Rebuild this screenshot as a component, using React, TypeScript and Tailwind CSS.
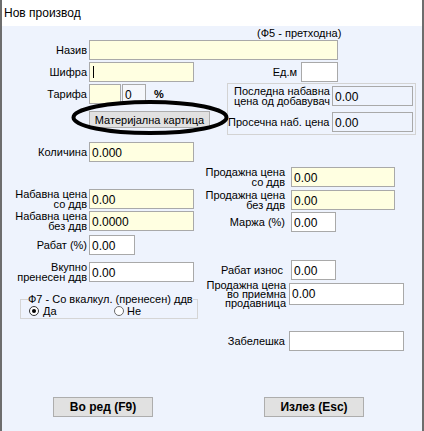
import React from "react";

const FONT = "font-['Liberation_Sans',Arial,sans-serif]";

function Box({
  className = "",
  value = "",
  bg = "bg-white",
  children,
}: {
  className?: string;
  value?: string;
  bg?: string;
  children?: React.ReactNode;
}) {
  return (
    <div
      className={`box-border shrink-0 border border-[#a9a9a9] px-[2px] pt-[3px] text-[12px] leading-[14px] text-black ${bg} ${className}`}
    >
      {children ?? value}
    </div>
  );
}

function Radio({ checked }: { checked?: boolean }) {
  return (
    <div
      className={`box-border flex h-[10px] w-[10px] shrink-0 items-center justify-center rounded-full border bg-white ${
        checked ? "border-[#333333]" : "border-[#6b6b6b]"
      }`}
    >
      {checked && <div className="h-[4px] w-[4px] rounded-full bg-black" />}
    </div>
  );
}

export default function App() {
  return (
    <div
      className={`relative box-border flex h-[431px] w-[424px] flex-col overflow-hidden border-l-2 border-r-2 border-[#6d6d6d] bg-[#eef3fd] text-black ${FONT}`}
    >
      {/* title bar */}
      <div className="flex h-[26px] shrink-0 items-center bg-white pl-[2px] text-[12px]">
        Нов производ
      </div>

      {/* F5 hint */}
      <div className="h-[14px] pl-[255px] text-[11px] leading-[14px]">(Ф5 - претходна)</div>

      {/* Назив */}
      <div className="flex h-[20px] items-center">
        <div className="w-[85px] text-right text-[11px] leading-[14px]">Назив</div>
        <Box className="ml-[2px] h-[20px] w-[249px]" bg="bg-[#ffffe1]" />
      </div>

      {/* Шифра + Ед.м */}
      <div className="mt-[2px] flex h-[20px] items-center">
        <div className="w-[85px] text-right text-[11px] leading-[14px]">Шифра</div>
        <Box className="ml-[2px] h-[20px] w-[105px]" bg="bg-[#ffffe1]">
          <div className="ml-[1px] h-[12px] w-[1px] bg-black" />
        </Box>
        <div className="w-[103px] text-right text-[11px] leading-[14px]">Ед.м</div>
        <Box className="ml-[4px] h-[20px] w-[37px]" />
      </div>

      {/* Тарифа + button + panel */}
      <div className="mt-[1px] flex items-start">
        <div className="flex w-[225px] flex-col">
          <div className="mt-[1px] flex h-[20px] items-center">
            <div className="w-[85px] text-right text-[11px] leading-[14px]">Тарифа</div>
            <Box className="ml-[2px] h-[20px] w-[32px]" bg="bg-[#ffffe1]" />
            <Box className="ml-[1px] h-[20px] w-[24px]" bg="bg-[#f5f7fb]" value="0" />
            <div className="ml-[8px] text-[11px] font-bold leading-[14px]">%</div>
          </div>
          <div className="ml-[87px] mt-[7px] box-border flex h-[17px] w-[121px] items-center justify-center border border-[#adadad] bg-[#e1e1e1] text-[11px] leading-[14px]">
            Материјална картица
          </div>
        </div>
        <div className="box-border flex h-[52px] w-[189px] flex-col border border-[#d3d3d3]">
          <div className="mt-[2px] flex">
            <div className="flex w-[101px] flex-col justify-center whitespace-nowrap pl-[6px] text-[11px] leading-[10px]">
              <span>Последна набавна</span>
              <span>цена од добавувач</span>
            </div>
            <Box className="ml-[3px] h-[20px] w-[81px]" bg="bg-transparent" value="0.00" />
          </div>
          <div className="mt-[6px] flex items-center">
            <div className="w-[101px] whitespace-nowrap text-right text-[11px] leading-[14px]">
              Просечна наб. цена
            </div>
            <Box className="ml-[3px] h-[20px] w-[81px]" bg="bg-transparent" value="0.00" />
          </div>
        </div>
      </div>

      {/* lower two columns */}
      <div className="flex items-start">
        {/* left */}
        <div className="flex w-[198px] shrink-0 flex-col">
          <div className="mt-[7px] flex h-[20px] items-center">
            <div className="w-[85px] text-right text-[11px] leading-[14px]">Количина</div>
            <Box className="ml-[2px] h-[20px] w-[105px]" bg="bg-[#ffffe1]" value="0.000" />
          </div>
          <div className="mt-[27px] flex h-[20px] items-center">
            <div className="flex w-[85px] flex-col text-right text-[11px] leading-[10px]">
              <span>Набавна цена</span>
              <span>со ддв</span>
            </div>
            <Box className="ml-[2px] h-[20px] w-[105px]" bg="bg-[#ffffe1]" value="0.00" />
          </div>
          <div className="mt-[2px] flex h-[20px] items-center">
            <div className="flex w-[85px] flex-col text-right text-[11px] leading-[10px]">
              <span>Набавна цена</span>
              <span>без ддв</span>
            </div>
            <Box className="ml-[2px] h-[20px] w-[105px]" bg="bg-[#ffffe1]" value="0.0000" />
          </div>
          <div className="mt-[4px] flex h-[20px] items-center">
            <div className="w-[85px] text-right text-[11px] leading-[14px]">Рабат (%)</div>
            <Box className="ml-[2px] h-[20px] w-[46px]" value="0.00" />
          </div>
          <div className="mt-[7px] flex h-[20px] items-center">
            <div className="flex w-[85px] flex-col text-right text-[11px] leading-[10px]">
              <span>Вкупно</span>
              <span>пренесен ддв</span>
            </div>
            <Box className="ml-[2px] h-[20px] w-[105px]" value="0.00" />
          </div>
          <fieldset className="ml-[18px] mt-[10px] box-border w-[178px] border border-[#d5d5d5] pb-[2px]">
            <legend className="ml-[7px] whitespace-nowrap px-0 text-[11px] leading-[14px]">
              Ф7 - Со вкалкул. (пренесен) ддв
            </legend>
            <div className="flex h-[10px] items-center text-[11px] leading-[10px]">
              <div className="ml-[8px] flex w-[85px] items-center">
                <Radio checked />
                <span className="ml-[4px]">Да</span>
              </div>
              <div className="flex items-center">
                <Radio />
                <span className="ml-[3px]">Не</span>
              </div>
            </div>
          </fieldset>
        </div>

        {/* right */}
        <div className="flex flex-col">
          <div className="mt-[32px] flex h-[20px] items-center">
            <div className="flex w-[85px] flex-col text-right text-[11px] leading-[10px]">
              <span>Продажна цена</span>
              <span>со ддв</span>
            </div>
            <Box className="ml-[6px] h-[20px] w-[104px]" bg="bg-[#ffffe1]" value="0.00" />
          </div>
          <div className="mt-[3px] flex h-[20px] items-center">
            <div className="flex w-[85px] flex-col text-right text-[11px] leading-[10px]">
              <span>Продажна цена</span>
              <span>без ддв</span>
            </div>
            <Box className="ml-[6px] h-[20px] w-[104px]" bg="bg-[#ffffe1]" value="0.00" />
          </div>
          <div className="mt-[2px] flex h-[20px] items-center">
            <div className="w-[85px] text-right text-[11px] leading-[14px]">Маржа (%)</div>
            <Box className="ml-[6px] h-[20px] w-[45px]" value="0.00" />
          </div>
          <div className="mt-[28px] flex h-[20px] items-center">
            <div className="w-[85px] pr-[2px] text-right text-[11px] leading-[14px]">Рабат износ</div>
            <Box className="ml-[6px] h-[20px] w-[45px]" value="0.00" />
          </div>
          <div className="mt-[3px] flex h-[22px] items-center">
            <div className="flex w-[86px] flex-col text-right text-[11px] leading-[9px]">
              <span>Продажна цена</span>
              <span>во приемна</span>
              <span>продавница</span>
            </div>
            <Box className="ml-[3px] h-[22px] w-[115px]" value="0.00" />
          </div>
          <div className="mt-[26px] flex h-[20px] items-center">
            <div className="w-[85px] text-right text-[11px] leading-[14px]">Забелешка</div>
            <Box className="ml-[4px] h-[20px] w-[115px]" />
          </div>
        </div>
      </div>

      {/* buttons */}
      <div className="mt-[46px] flex">
        <div className="ml-[51px] box-border flex h-[20px] w-[100px] items-center justify-center border border-[#adadad] bg-[#e1e1e1] text-[12px] font-bold leading-[14px]">
          Во ред (F9)
        </div>
        <div className="ml-[111px] box-border flex h-[20px] w-[100px] items-center justify-center border border-[#adadad] bg-[#e1e1e1] text-[12px] font-bold leading-[14px]">
          Излез (Esc)
        </div>
      </div>

      {/* annotation ellipse */}
      <svg
        className="pointer-events-none absolute left-[67px] top-[98px]"
        width="162"
        height="40"
        viewBox="0 0 162 40"
      >
        <ellipse cx="81" cy="19.5" rx="76.5" ry="15.5" fill="none" stroke="#000" strokeWidth="4" />
      </svg>
    </div>
  );
}
